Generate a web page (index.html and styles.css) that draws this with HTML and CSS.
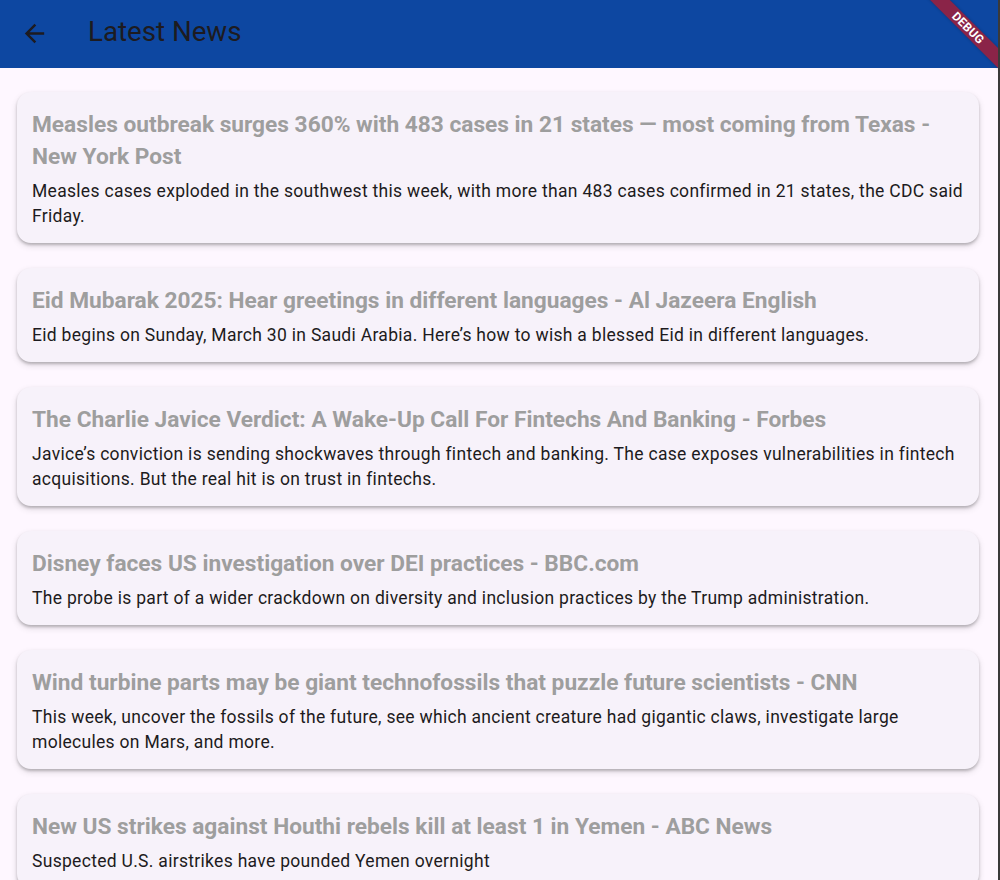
FILE: index.html
```html
<!DOCTYPE html>
<html lang="en">
<head>
<meta charset="utf-8">
<title>Latest News</title>
<link rel="stylesheet" href="styles.css">
</head>
<body>
<div class="window">
  <header class="appbar">
    <button class="back" aria-label="Back">
      <svg viewBox="0 0 24 24" width="29" height="29"><path d="M20 11H7.83l5.59-5.59L12 4l-8 8 8 8 1.41-1.41L7.83 13H20v-2z" fill="#1d1b20"/></svg>
    </button>
    <h1 class="title">Latest News</h1>
  </header>
  <main class="list">
    <article class="card">
      <h2 class="card-title">Measles outbreak surges 360% with 483 cases in 21 states — most coming from Texas - New York Post</h2>
      <p class="card-desc">Measles cases exploded in the southwest this week, with more than 483 cases confirmed in 21 states, the CDC said Friday.</p>
    </article>
    <article class="card">
      <h2 class="card-title">Eid Mubarak 2025: Hear greetings in different languages - Al Jazeera English</h2>
      <p class="card-desc">Eid begins on Sunday, March 30 in Saudi Arabia. Here’s how to wish a blessed Eid in different languages.</p>
    </article>
    <article class="card">
      <h2 class="card-title">The Charlie Javice Verdict: A Wake-Up Call For Fintechs And Banking - Forbes</h2>
      <p class="card-desc">Javice’s conviction is sending shockwaves through fintech and banking. The case exposes vulnerabilities in fintech acquisitions. But the real hit is on trust in fintechs.</p>
    </article>
    <article class="card">
      <h2 class="card-title">Disney faces US investigation over DEI practices - BBC.com</h2>
      <p class="card-desc">The probe is part of a wider crackdown on diversity and inclusion practices by the Trump administration.</p>
    </article>
    <article class="card">
      <h2 class="card-title">Wind turbine parts may be giant technofossils that puzzle future scientists - CNN</h2>
      <p class="card-desc">This week, uncover the fossils of the future, see which ancient creature had gigantic claws, investigate large molecules on Mars, and more.</p>
    </article>
    <article class="card">
      <h2 class="card-title">New US strikes against Houthi rebels kill at least 1 in Yemen - ABC News</h2>
      <p class="card-desc">Suspected U.S. airstrikes have pounded Yemen overnight</p>
    </article>
  </main>
  <div class="banner"><span>DEBUG</span></div>
</div>
</body>
</html>
```

FILE: styles.css
```css
* { box-sizing: border-box; }
html, body {
  margin: 0;
  padding: 0;
  height: 100%;
  overflow: hidden;
  background: #3a3a3a;
}
body {
  font-family: Roboto, "Noto Sans", "Liberation Sans", sans-serif;
}
.window {
  position: relative;
  width: 998px;
  height: 880px;
  background: #fef7ff;
  overflow: hidden;
}
.appbar {
  height: 68px;
  background: #0d47a1;
  display: flex;
  align-items: center;
  padding-left: 20px;
}
.back {
  width: 29px;
  height: 29px;
  padding: 0;
  border: 0;
  background: none;
  display: flex;
  margin-top: -2px;
}
.title {
  margin: -4px 0 0 39px;
  font-size: 27.7px;
  font-weight: 400;
  color: #1d1b20;
  line-height: 32px;
}
.list {
  display: flex;
  flex-direction: column;
  gap: 25px;
  padding: 24px 19px 0 17px;
}
.card {
  background: #f7f2fa;
  border-radius: 14px;
  padding: 17px 14px 14px 15px;
  box-shadow: 0 2px 3px rgba(0,0,0,0.22), 0 3px 7px rgba(0,0,0,0.12);
}
.card-title {
  margin: 0 0 6px;
  font-size: 22.7px;
  font-weight: 700;
  line-height: 32px;
  color: #9e9e9e;
}
.card-desc {
  margin: 0;
  font-size: 17.5px;
  line-height: 25px;
  letter-spacing: 0.3px;
  color: #1d1b20;
}
.banner {
  position: absolute;
  left: 906px;
  top: 21px;
  width: 124px;
  height: 14px;
  background: #8a2448;
  transform: rotate(45deg);
  display: flex;
  align-items: center;
  justify-content: center;
  box-shadow: 0 0 3px rgba(0,0,0,0.25);
}
.banner span {
  color: #fff;
  font-size: 12px;
  font-weight: 700;
  letter-spacing: 0.2px;
  line-height: 14px;
}
```
